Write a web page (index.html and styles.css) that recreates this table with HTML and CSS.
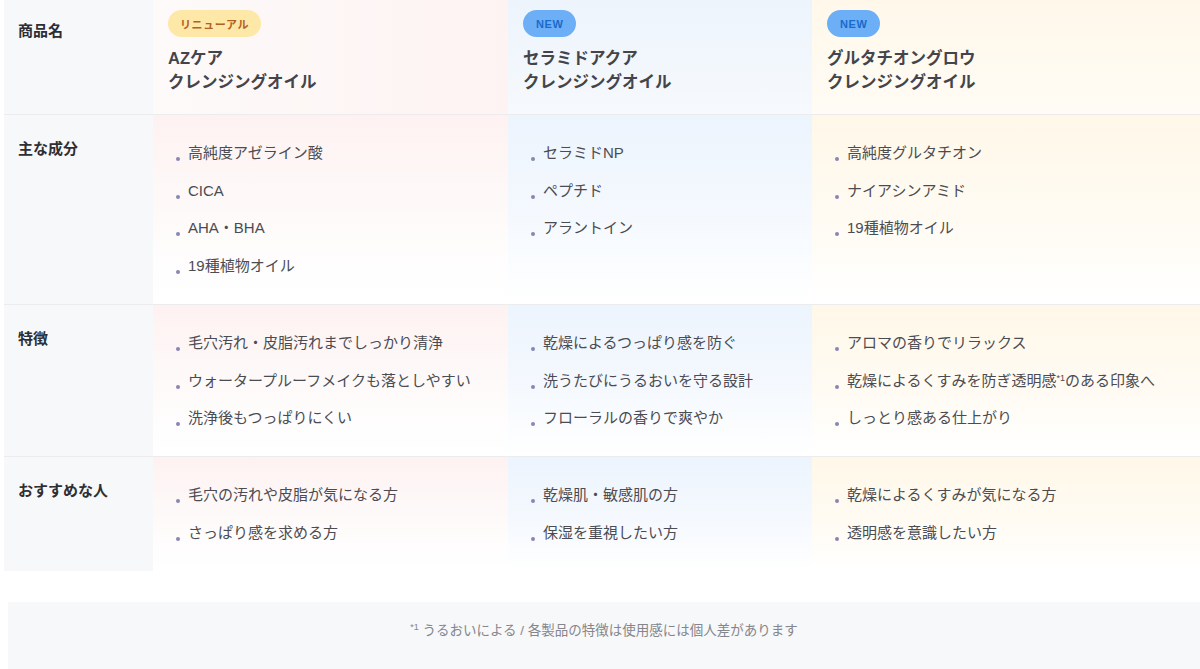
FILE: index.html
```html
<!DOCTYPE html>
<html lang="ja">
<head>
<meta charset="utf-8">
<title>クレンジングオイル比較</title>
<link rel="stylesheet" href="styles.css">
</head>
<body>
<div class="table">
  <div class="row row-head">
    <div class="label">商品名</div>
    <div class="cell pink">
      <span class="badge badge-renewal">リニューアル</span>
      <div class="name">AZケア<br>クレンジングオイル</div>
    </div>
    <div class="cell blue">
      <span class="badge badge-new">NEW</span>
      <div class="name">セラミドアクア<br>クレンジングオイル</div>
    </div>
    <div class="cell yellow">
      <span class="badge badge-new">NEW</span>
      <div class="name">グルタチオングロウ<br>クレンジングオイル</div>
    </div>
  </div>

  <div class="row">
    <div class="label">主な成分</div>
    <div class="cell pink">
      <ul class="list">
        <li>高純度アゼライン酸</li>
        <li>CICA</li>
        <li>AHA・BHA</li>
        <li>19種植物オイル</li>
      </ul>
    </div>
    <div class="cell blue">
      <ul class="list">
        <li>セラミドNP</li>
        <li>ペプチド</li>
        <li>アラントイン</li>
      </ul>
    </div>
    <div class="cell yellow">
      <ul class="list">
        <li>高純度グルタチオン</li>
        <li>ナイアシンアミド</li>
        <li>19種植物オイル</li>
      </ul>
    </div>
  </div>

  <div class="row">
    <div class="label">特徴</div>
    <div class="cell pink">
      <ul class="list">
        <li>毛穴汚れ・皮脂汚れまでしっかり清浄</li>
        <li>ウォータープルーフメイクも落としやすい</li>
        <li>洗浄後もつっぱりにくい</li>
      </ul>
    </div>
    <div class="cell blue">
      <ul class="list">
        <li>乾燥によるつっぱり感を防ぐ</li>
        <li>洗うたびにうるおいを守る設計</li>
        <li>フローラルの香りで爽やか</li>
      </ul>
    </div>
    <div class="cell yellow">
      <ul class="list">
        <li>アロマの香りでリラックス</li>
        <li>乾燥によるくすみを防ぎ透明感<sup class="note">*1</sup>のある印象へ</li>
        <li>しっとり感ある仕上がり</li>
      </ul>
    </div>
  </div>

  <div class="row row-last">
    <div class="label">おすすめな人</div>
    <div class="cell pink">
      <ul class="list">
        <li>毛穴の汚れや皮脂が気になる方</li>
        <li>さっぱり感を求める方</li>
      </ul>
    </div>
    <div class="cell blue">
      <ul class="list">
        <li>乾燥肌・敏感肌の方</li>
        <li>保湿を重視したい方</li>
      </ul>
    </div>
    <div class="cell yellow">
      <ul class="list">
        <li>乾燥によるくすみが気になる方</li>
        <li>透明感を意識したい方</li>
      </ul>
    </div>
  </div>
</div>

<div class="footer">
  <p class="footnote"><sup class="note">*1</sup> うるおいによる / 各製品の特徴は使用感には個人差があります</p>
</div>
</body>
</html>
```

FILE: styles.css
```css
* { box-sizing: border-box; }

html, body {
  margin: 0;
  padding: 0;
  background: #ffffff;
}

body {
  font-family: "Liberation Sans", "Noto Sans CJK JP", sans-serif;
  color: #4a4a50;
  width: 1200px;
  height: 669px;
  overflow: hidden;
}

.table {
  padding-left: 4px;
}

.row {
  display: grid;
  grid-template-columns: 149px 355px 304px 1fr;
  border-bottom: 1px solid #ececef;
}

.row-last {
  border-bottom: none;
}

.label {
  background: #f7f8fa;
  padding: 23px 0 0 14px;
  font-size: 15px;
  line-height: 22px;
  font-weight: 700;
  color: #2e2f33;
}

.row-head .label {
  padding-top: 20px;
}

.cell {
  padding: 27px 15px;
}

.row-head .cell {
  padding: 10px 15px 20px;
}

.pink { background: linear-gradient(180deg, #fdf2f1 0%, #fefafa 55%, #ffffff 100%); }
.blue { background: linear-gradient(180deg, #ecf4fd 0%, #f5f9fe 55%, #ffffff 100%); }
.yellow { background: linear-gradient(180deg, #fff8e9 0%, #fffbf3 55%, #ffffff 100%); }

.row-head .pink { background: linear-gradient(90deg, #fdfafa 0%, #fdf3f2 100%); }
.row-head .blue { background: linear-gradient(180deg, #edf4fc 0%, #f6f9fd 100%); }
.row-head .yellow { background: linear-gradient(180deg, #fff8ea 0%, #fffcf5 100%); }

.badge {
  display: inline-flex;
  align-items: center;
  height: 27px;
  padding: 0 12px;
  border-radius: 14px;
  font-size: 11px;
  font-weight: 700;
  letter-spacing: 0.6px;
}

.badge-renewal {
  background: #fde8a8;
  color: #b2611f;
}

.badge-new {
  background: #6caff6;
  color: #1a6acc;
  padding: 0 13px;
}

.name {
  margin-top: 9px;
  font-size: 16.5px;
  line-height: 24px;
  font-weight: 700;
  color: #44454b;
}

.list {
  list-style: none;
  margin: 0;
  padding: 0 0 0 20px;
  display: flex;
  flex-direction: column;
  gap: 15.7px;
}

.list li {
  position: relative;
  font-size: 15px;
  line-height: 22px;
  color: #4b4c52;
  white-space: nowrap;
}

.list li::before {
  content: "";
  position: absolute;
  left: -12px;
  top: 15px;
  width: 4px;
  height: 4px;
  border-radius: 50%;
  background: #8a86b4;
}

.note {
  font-size: 9px;
  vertical-align: 5px;
  line-height: 0;
}

.footer {
  margin: 31px 0 0 8px;
  background: #f7f8fa;
  height: 70px;
  padding-top: 19px;
}

.footnote {
  margin: 0;
  text-align: center;
  font-size: 13.5px;
  line-height: 20px;
  color: #85868c;
}
```
